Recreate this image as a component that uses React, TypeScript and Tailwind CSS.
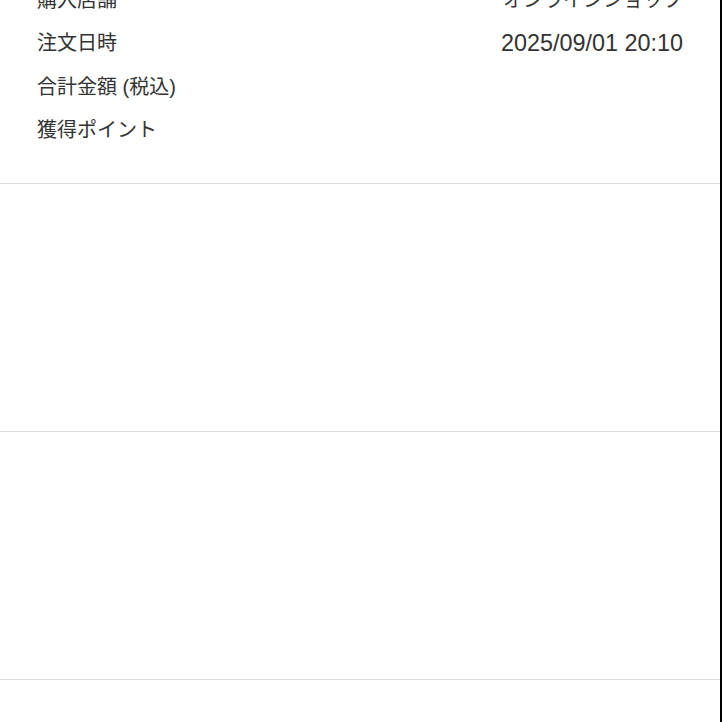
const rows = [
  { label: "購入店舗", value: "オンラインショップ", latin: false },
  { label: "注文日時", value: "2025/09/01 20:10", latin: true },
  { label: "合計金額 (税込)", value: "", latin: false },
  { label: "獲得ポイント", value: "", latin: false },
]

// 注文情報のラベルと値を左右に並べる
function InfoRow({ label, value, latin }: { label: string; value: string; latin: boolean }) {
  return (
    <div className="flex h-[43.5px] items-center justify-between">
      <span>{label}</span>
      <span className={latin ? "text-[23.4px] leading-none" : ""}>{value}</span>
    </div>
  )
}

export default function App() {
  return (
    <div
      className="h-[722px] w-[722px] overflow-hidden border-r-2 border-black bg-white text-[20px] text-[#333333]"
      style={{ fontFamily: '"Liberation Sans", "Noto Sans CJK JP", sans-serif' }}
    >
      <div className="-mt-[22px] px-[37px] pb-[31px]">
        {rows.map((row) => (
          <InfoRow key={row.label} label={row.label} value={row.value} latin={row.latin} />
        ))}
      </div>
      <section className="h-[248px] border-t border-[#dcdcdc]" />
      <section className="h-[248px] border-t border-[#dcdcdc]" />
      <section className="h-[248px] border-t border-[#dcdcdc]" />
    </div>
  )
}
